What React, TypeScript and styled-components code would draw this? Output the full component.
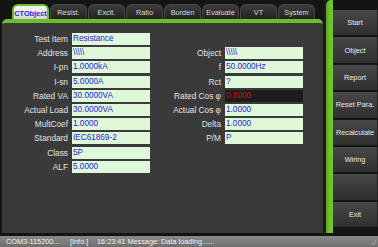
import React from 'react'
import styled, { createGlobalStyle } from 'styled-components'

const GlobalStyle = createGlobalStyle`
  html, body {
    margin: 0;
    padding: 0;
    background: #141414;
  }
  body {
    font-family: "Liberation Sans", Arial, sans-serif;
  }
`

const GREEN = '#6cbd2c'

const tabs = ['CTObject', 'Resist.', 'Excit.', 'Ratio', 'Burden', 'Evaluate', 'VT', 'System']
const buttons = ['Start', 'Object', 'Report', 'Reset Para.', 'Recalculate', 'Wiring', '', 'Exit']

interface Field {
  label: string
  value: string
  dark?: boolean
}

const slashes = '\\\\\\\\\\'

const rows: [Field, Field | null][] = [
  [{ label: 'Test Item', value: 'Resistance' }, null],
  [{ label: 'Address', value: slashes }, { label: 'Object', value: slashes }],
  [{ label: 'I-pn', value: '1.0000kA' }, { label: 'f', value: '50.0000Hz' }],
  [{ label: 'I-sn', value: '5.0000A' }, { label: 'Rct', value: '?' }],
  [{ label: 'Rated VA', value: '30.0000VA' }, { label: 'Rated Cos φ', value: '0.8000', dark: true }],
  [{ label: 'Actual Load', value: '30.0000VA' }, { label: 'Actual Cos φ', value: '1.0000' }],
  [{ label: 'MultCoef', value: '1.0000' }, { label: 'Delta', value: '1.0000' }],
  [{ label: 'Standard', value: 'IEC61869-2' }, { label: 'P/M', value: 'P' }],
  [{ label: 'Class', value: '5P' }, null],
  [{ label: 'ALF', value: '5.0000' }, null],
]

const App = () => {
  return (
    <Screen>
      <GlobalStyle />
      <Main>
        <Workspace>
          <TabBar>
            {tabs.map((t, i) => (
              <Tab key={t} $active={i === 0}>{t}</Tab>
            ))}
          </TabBar>
          <Panel>
            <Form>
              {rows.map(([left, right], i) => (
                <React.Fragment key={i}>
                  <Label>{left.label}</Label>
                  <Value $dark={left.dark}>{left.value}</Value>
                  {right ? (
                    <>
                      <Label>{right.label}</Label>
                      <Value $dark={right.dark}>{right.value}</Value>
                    </>
                  ) : (
                    <>
                      <span />
                      <span />
                    </>
                  )}
                </React.Fragment>
              ))}
            </Form>
          </Panel>
        </Workspace>
        <Divider />
        <GreenBar />
        <ButtonColumn>
          {buttons.map((b, i) => (
            <SideButton key={i}>{b}</SideButton>
          ))}
        </ButtonColumn>
      </Main>
      <StatusBar>
        <StatusCell $width={64}>COM3-115200...</StatusCell>
        <StatusCell $width={27}>[Info.]</StatusCell>
        <StatusCell>16:23:41 Message: Data loading......</StatusCell>
        <Grip width="8" height="8" viewBox="0 0 8 8">
          <path d="M7 2 L2 7 M7 4.5 L4.5 7" stroke="#b5b5b5" strokeWidth="0.8" />
        </Grip>
      </StatusBar>
    </Screen>
  )
}

export default App

const Screen = styled.div`
  width: 378px;
  height: 247px;
  display: flex;
  flex-direction: column;
  background: #141414;
  overflow: hidden;
`

const Main = styled.div`
  flex: 1;
  display: flex;
  min-height: 0;
`

const Workspace = styled.div`
  width: 324px;
  box-sizing: border-box;
  padding: 0 1px 3px 2px;
  display: flex;
  flex-direction: column;
`

const TabBar = styled.div`
  height: 19px;
  display: flex;
  align-items: flex-end;
  padding-left: 10px;
`

const Tab = styled.div<{ $active?: boolean }>`
  box-sizing: border-box;
  width: 37px;
  height: ${p => (p.$active ? '16px' : '15px')};
  margin-right: 1px;
  margin-bottom: ${p => (p.$active ? '-1px' : '0')};
  border-radius: 6px 6px 0 0;
  display: flex;
  align-items: center;
  justify-content: center;
  font-size: 7.3px;
  white-space: nowrap;
  color: ${p => (p.$active ? '#1f2fd6' : '#dcdcdc')};
  font-weight: ${p => (p.$active ? 'bold' : 'normal')};
  background: ${p =>
    p.$active
      ? 'linear-gradient(#f6f6f6, #d2d2d2)'
      : 'linear-gradient(#3d3d3d, #222222)'};
  border: ${p => (p.$active ? `2px solid ${GREEN}` : '1px solid #474747')};
  border-bottom: none;
`

const Panel = styled.div`
  flex: 1;
  background: #3a3a3a;
  border-top: 4px solid ${GREEN};
  border-radius: 5px 5px 0 0;
  padding-top: 10px;
`

const Form = styled.div`
  display: grid;
  grid-template-columns: 67px 78px 69px 78px;
  grid-auto-rows: 12px;
  column-gap: 3px;
  row-gap: 2.2px;
`

const Label = styled.div`
  color: #e4e4e4;
  font-size: 8.3px;
  line-height: 12px;
  text-align: right;
  white-space: nowrap;
  padding-right: 1px;
`

const Value = styled.div<{ $dark?: boolean }>`
  background: ${p => (p.$dark ? '#1c1c1c' : '#e0f8da')};
  color: ${p => (p.$dark ? '#c01414' : '#2323e0')};
  font-size: 8.2px;
  line-height: 12px;
  padding-left: 1px;
  white-space: nowrap;
  overflow: hidden;
`

const Divider = styled.div`
  width: 2px;
  background: #1e1e1e;
`

const GreenBar = styled.div`
  width: 7px;
  margin-bottom: 3px;
  border-radius: 5px 0 0 0;
  background: linear-gradient(90deg, #5ca423, ${GREEN} 40%, #74c634);
`

const ButtonColumn = styled.div`
  width: 45px;
  display: flex;
  flex-direction: column;
  gap: 2px;
  padding-top: 10px;
`

const SideButton = styled.div`
  height: 25.4px;
  flex-shrink: 0;
  display: flex;
  align-items: center;
  justify-content: center;
  background: linear-gradient(#484848, #2f2f2f);
  border-right: 1px solid #222;
  color: #ececec;
  font-size: 7.3px;
  white-space: nowrap;
`

const StatusBar = styled.div`
  height: 11px;
  flex-shrink: 0;
  display: flex;
  align-items: center;
  padding-left: 6px;
  position: relative;
  background: linear-gradient(#8a8a8a, #6e6e6e);
  color: #f2f2f2;
  font-size: 7.3px;
  white-space: nowrap;
`

const StatusCell = styled.span<{ $width?: number }>`
  width: ${p => (p.$width ? `${p.$width}px` : 'auto')};
  flex-shrink: 0;
`

const Grip = styled.svg`
  position: absolute;
  right: 1px;
  bottom: 1px;
`
